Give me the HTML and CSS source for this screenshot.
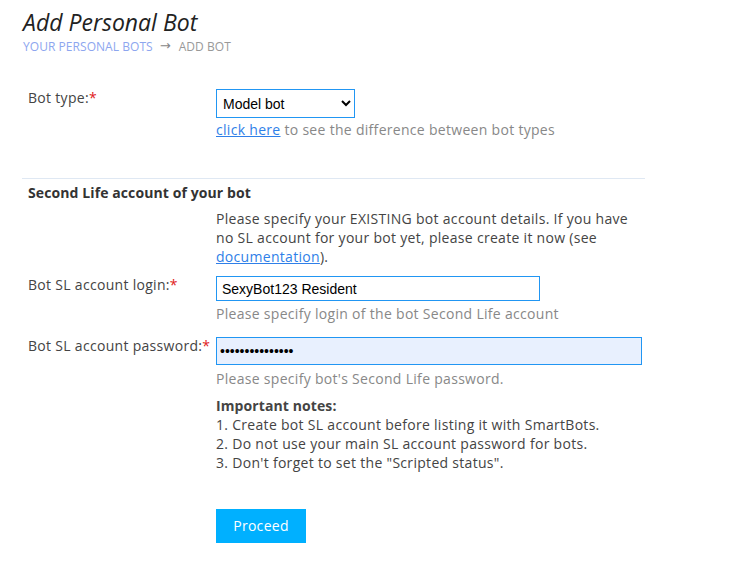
FILE: index.html
```html
<!DOCTYPE html>
<html>
<head>
<meta charset="utf-8">
<link rel="stylesheet" href="styles.css">
</head>
<body>
<div class="page">
  <h1 class="title">Add Personal Bot</h1>
  <div class="crumbs"><a class="crumb-link" href="#">Your personal bots</a><span class="arrow">&#8594;</span><span class="crumb-cur">Add bot</span></div>

  <form class="form">
    <div class="row row-type">
      <label class="label">Bot type:<span class="req">*</span></label>
      <div class="control">
        <select class="select"><option>Model bot</option></select>
        <div class="help"><a href="#" class="link">click here</a> to see the difference between bot types</div>
      </div>
    </div>

    <div class="section">
      <div class="section-title">Second Life account of your bot</div>
      <div class="row row-para">
        <div class="label"></div>
        <div class="control">
          <p class="para">Please specify your EXISTING bot account details. If you have no SL account for your bot yet, please create it now (see <a href="#" class="link">documentation</a>).</p>
        </div>
      </div>
      <div class="row row-login">
        <label class="label">Bot SL account login:<span class="req">*</span></label>
        <div class="control">
          <input class="input input-login" type="text" value="SexyBot123 Resident">
          <div class="hint hint-login">Please specify login of the bot Second Life account</div>
        </div>
      </div>
      <div class="row row-pass">
        <label class="label">Bot SL account password:<span class="req">*</span></label>
        <div class="control">
          <input class="input input-pass" type="password" value="abcdefghijklmno">
          <div class="hint hint-pass">Please specify bot's Second Life password.</div>
        </div>
      </div>
      <div class="row row-notes">
        <div class="label"></div>
        <div class="control notes">
          <div class="notes-title">Important notes:</div>
          <div>1. Create bot SL account before listing it with SmartBots.</div>
          <div>2. Do not use your main SL account password for bots.</div>
          <div>3. Don't forget to set the "Scripted status".</div>
        </div>
      </div>
      <div class="row row-btn">
        <div class="label"></div>
        <div class="control">
          <button type="button" class="btn">Proceed</button>
        </div>
      </div>
    </div>
  </form>
</div>
</body>
</html>
```

FILE: styles.css
```css
html, body {
  margin: 0;
  background: #fff;
}
body {
  font-family: "Open Sans", "Noto Sans", sans-serif;
  font-size: 14px;
  letter-spacing: 0.3px;
  color: #444;
}
.page {
  padding: 7px 0 0 22px;
}
.title {
  margin: 0 0 0 1px;
  font-size: 23px;
  font-style: italic;
  font-weight: 400;
  line-height: 30px;
  letter-spacing: 0;
  color: #222;
}
.crumbs {
  margin: 2px 0 0 1px;
  font-size: 12px;
  line-height: 16px;
  letter-spacing: 0.05px;
  text-transform: uppercase;
  display: flex;
  align-items: center;
  height: 16px;
}
.crumb-link {
  color: #8da6ef;
  text-decoration: none;
}
.arrow {
  color: #888;
  font-family: "DejaVu Sans", sans-serif;
  font-size: 13px;
  margin: -2px 8px 0 7px;
}
.crumb-cur {
  color: #999;
}
.form {
  width: 623px;
  margin-top: 34px;
}
.row {
  display: flex;
  align-items: flex-start;
}
.label {
  width: 188px;
  flex: none;
  padding-left: 6px;
  line-height: 17px;
  color: #444;
}
.req {
  color: #e02020;
}
.control {
  flex: 1;
  line-height: 19px;
}
.select {
  display: block;
  width: 139px;
  height: 29px;
  border: 1px solid #2196f3;
  border-radius: 0;
  background: #fff;
  font-family: "Liberation Sans", Arial, sans-serif;
  font-size: 14px;
  letter-spacing: 0;
  color: #000;
  padding: 0 2px;
  margin: 0;
}
.help {
  margin-top: 3px;
  line-height: 18px;
  color: #888;
}
.link {
  color: #2f7fe8;
  text-decoration: underline;
}
.section {
  margin-top: 39px;
  border-top: 1px solid #dfe8f3;
}
.section-title {
  padding: 4px 0 0 6px;
  font-weight: 700;
  line-height: 19px;
  letter-spacing: 0.1px;
  color: #333;
}
.row-para {
  margin-top: 7px;
}
.para {
  margin: 0;
  width: 420px;
  color: #444;
}
.row-login {
  margin-top: 10px;
}
.input {
  display: block;
  box-sizing: border-box;
  margin: 0;
  border: 1px solid #2196f3;
  border-radius: 0;
  font-family: "Liberation Sans", Arial, sans-serif;
  font-size: 14px;
  letter-spacing: 0;
  color: #000;
  outline: none;
}
.input-login {
  width: 324px;
  height: 25px;
  padding: 0 5px;
  background: #fff;
}
.input-pass {
  width: 426px;
  height: 28px;
  padding: 0 3px;
  background: #e8f0fe;
}
.hint {
  color: #888;
}
.hint-login {
  margin-top: 3px;
}
.hint-pass {
  margin-top: 4px;
}
.row-pass {
  margin-top: 14px;
}
.row-notes {
  margin-top: 8px;
}
.notes {
  color: #444;
}
.notes-title {
  font-weight: 700;
  letter-spacing: 0.1px;
}
.row-btn {
  margin-top: 37px;
}
.btn {
  width: 90px;
  height: 34px;
  border: none;
  border-radius: 0;
  background: #00b0ff;
  color: #fff;
  font-family: "Open Sans", "Noto Sans", sans-serif;
  font-size: 14px;
  letter-spacing: 0.3px;
  padding: 0 0 2px;
  cursor: pointer;
}
```
